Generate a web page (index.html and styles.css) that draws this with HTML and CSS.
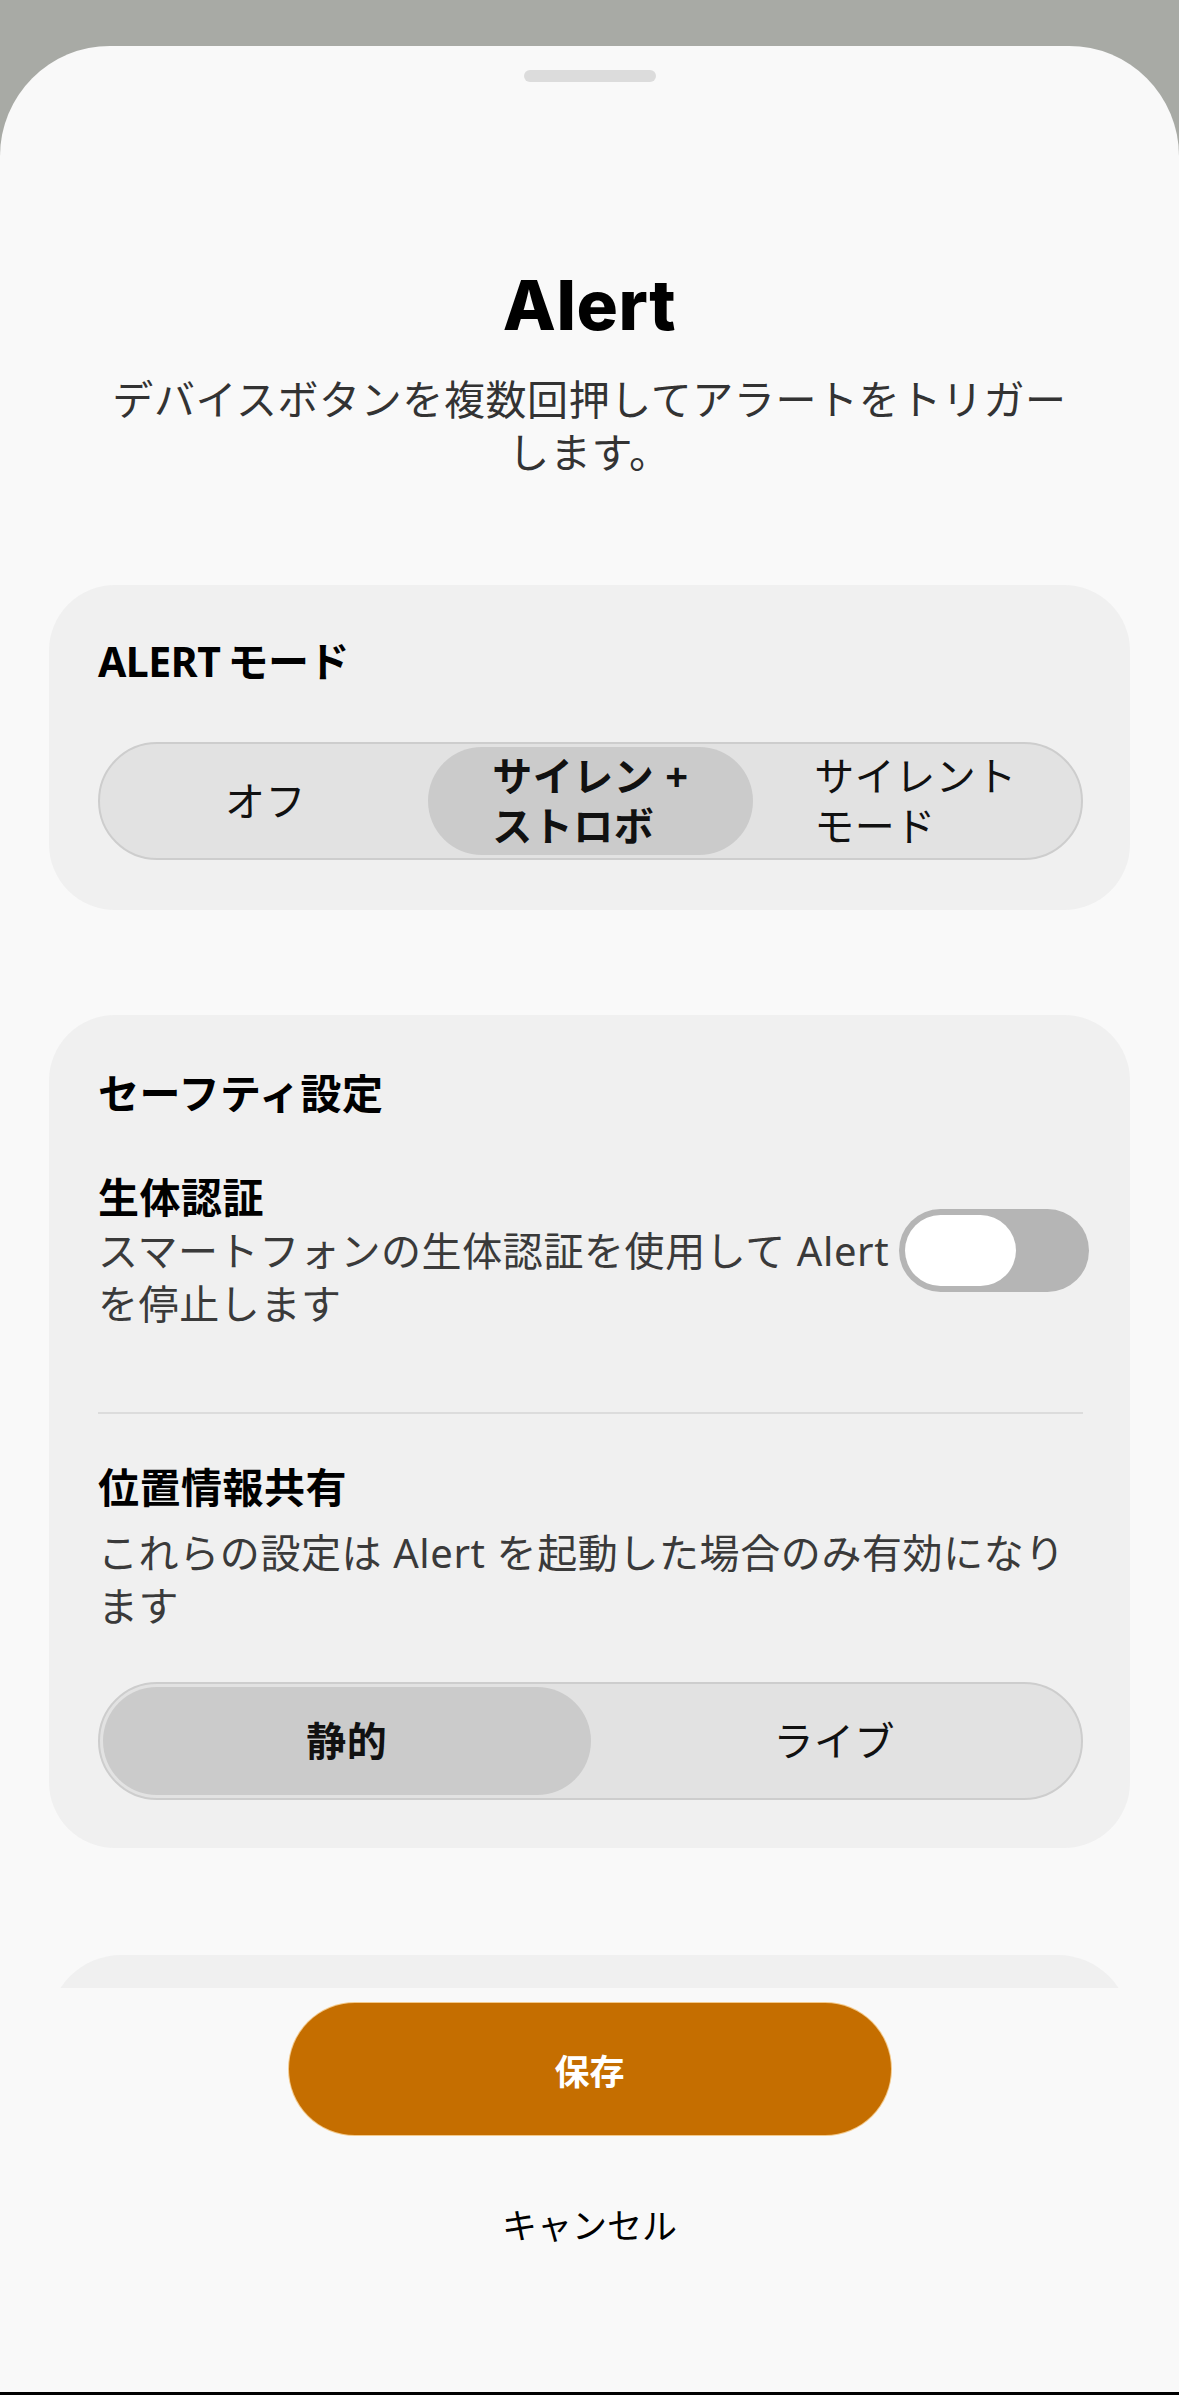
FILE: index.html
```html
<!DOCTYPE html>
<html lang="ja">
<head>
    <meta charset="UTF-8">
    <meta name="viewport" content="width=device-width, initial-scale=1.0">
    <title>Alert</title>
    <link rel="stylesheet" href="styles.css">
</head>
<body>
    <div class="sheet">
        <div class="handle"></div>

        <div class="scroll">
            <h1>Alert</h1>
            <p class="subtitle">デバイスボタンを複数回押してアラートをトリガー<br>します。</p>

            <section class="card card-mode">
                <h2>ALERT モード</h2>
                <div class="segmented three">
                    <div class="segment">オフ</div>
                    <div class="segment active"><span>サイレン +<br>ストロボ</span></div>
                    <div class="segment"><span>サイレント<br>モード</span></div>
                </div>
            </section>

            <section class="card card-safety">
                <h2>セーフティ設定</h2>

                <div class="setting-row">
                    <div class="setting-text">
                        <h3>生体認証</h3>
                        <p>スマートフォンの生体認証を使用して Alert を停止します</p>
                    </div>
                    <div class="toggle">
                        <span class="knob"></span>
                    </div>
                </div>

                <div class="divider"></div>

                <div class="setting-block">
                    <h3>位置情報共有</h3>
                    <p>これらの設定は Alert を起動した場合のみ有効になります</p>
                </div>

                <div class="segmented two">
                    <div class="segment active">静的</div>
                    <div class="segment">ライブ</div>
                </div>
            </section>

            <section class="card card-next"></section>
        </div>

        <div class="footer">
            <button class="btn-save">保存</button>
            <div class="btn-cancel">キャンセル</div>
            <div class="home-bar"></div>
        </div>
    </div>
</body>
</html>
```

FILE: styles.css
```css
html, body {
    margin: 0;
    padding: 0;
}

body {
    background-color: #a8aaa5;
    font-family: "Noto Sans", "Noto Sans CJK JP", sans-serif;
    color: #111;
    height: 2395px;
    overflow: hidden;
}

.sheet {
    margin-top: 46px;
    height: 2349px;
    background-color: #f9f9f9;
    border-radius: 110px 110px 0 0;
    display: flex;
    flex-direction: column;
    padding-top: 24px;
    box-sizing: border-box;
}

.handle {
    width: 132px;
    height: 12px;
    border-radius: 6px;
    background-color: #dcdcdc;
    margin: 0 auto;
    flex-shrink: 0;
}

.scroll {
    flex: 1;
    overflow: hidden;
    padding: 0 49px 0 49px;
}

h1 {
    font-family: Inter, "Noto Sans", sans-serif;
    font-weight: 800;
    font-size: 69px;
    line-height: 82px;
    letter-spacing: 0.5px;
    text-align: center;
    margin: 182px 0 0 0;
    color: #000;
}

.subtitle {
    margin: 27px 0 0 0;
    font-size: 41px;
    line-height: 53px;
    letter-spacing: 0.6px;
    text-align: center;
    color: #333;
}

/* cards */
.card {
    background-color: #f0f0f0;
    border-radius: 66px;
    padding: 50px 47px 50px 49px;
}

.card-mode {
    margin-top: 106px;
}

.card-mode h2 {
    letter-spacing: -0.5px;
    word-spacing: -3px;
}

.card-safety {
    margin-top: 105px;
    padding-top: 52px;
    padding-bottom: 48px;
}

.card-next {
    margin-top: 107px;
    height: 200px;
    border-radius: 72px;
}

h2,
h3 {
    font-size: 41px;
    line-height: 53px;
    letter-spacing: 0.5px;
    font-weight: 700;
    margin: 0;
    color: #000;
}

.setting-text p,
.setting-block p {
    font-size: 40px;
    line-height: 53px;
    letter-spacing: 0.6px;
    margin: 0;
    color: #3a3a3a;
}

/* segmented controls */
.segmented {
    margin-top: 54px;
    height: 118px;
    box-sizing: border-box;
    border: 2px solid #cdcdcd;
    background-color: #e2e2e2;
    border-radius: 59px;
    padding: 3px;
    display: grid;
}

.segmented.three {
    grid-template-columns: 1fr 1fr 1fr;
}

.segmented.two {
    grid-template-columns: 1fr 1fr;
    margin-top: 50px;
}

.segment {
    display: flex;
    align-items: center;
    justify-content: center;
    font-size: 40px;
    line-height: 50px;
    letter-spacing: 0.5px;
    color: #111;
    border-radius: 54px;
}

.segment span {
    text-align: left;
}

.segment.active {
    background-color: #cbcbcb;
    font-weight: 700;
}

/* biometric row */
.setting-row {
    margin-top: 51px;
    display: flex;
    align-items: center;
    margin-right: -6px;
}

.setting-text {
    flex: 1;
}

.toggle {
    margin-left: 4px;
    width: 190px;
    height: 83px;
    border-radius: 42px;
    background-color: #b5b5b5;
    padding: 6px;
    box-sizing: border-box;
    flex-shrink: 0;
}

.knob {
    display: block;
    width: 111px;
    height: 71px;
    border-radius: 36px;
    background-color: #fff;
}

.divider {
    margin-top: 82px;
    height: 2px;
    background-color: #dcdcdc;
}

.setting-block {
    margin-top: 47px;
}

.setting-block p {
    margin-top: 12px;
}

/* footer */
.footer {
    height: 407px;
    flex-shrink: 0;
    display: flex;
    flex-direction: column;
    align-items: center;
    padding-top: 15px;
    box-sizing: border-box;
}

.btn-save {
    width: 602px;
    height: 132px;
    border: none;
    border-radius: 66px;
    background-color: #c56e00;
    box-shadow: 0 0 0 1px #f3c98a;
    color: #fff;
    font-family: "Noto Sans", "Noto Sans CJK JP", sans-serif;
    font-size: 35px;
    font-weight: 700;
}

.btn-cancel {
    margin-top: 64px;
    font-size: 35px;
    line-height: 53px;
    color: #000;
}

.home-bar {
    margin-top: auto;
    width: 100%;
    height: 3px;
    background-color: #000;
}
```
